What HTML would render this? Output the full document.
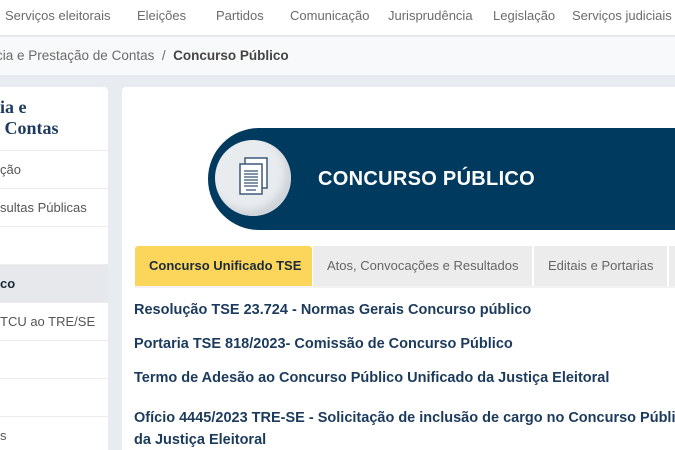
<!DOCTYPE html>
<html><head><meta charset="utf-8"><style>
*{margin:0;padding:0;box-sizing:border-box}
html,body{width:675px;height:450px;overflow:hidden}
body{background:#e8ecf0;font-family:"Liberation Sans",sans-serif;position:relative}
.nav{position:absolute;left:0;top:0;width:675px;height:36px;background:#fff;border-bottom:1px solid #e6e6e6;font-size:13px;color:#6b6b6b;overflow:hidden}
.nav span{position:absolute;top:8px;white-space:nowrap}
.bc{position:absolute;left:0;top:37px;width:675px;height:38px;background:#f8f9fa;font-size:13.5px;color:#6b6b6b;padding:11px 0 0 0;white-space:nowrap;overflow:hidden}
.bc b{color:#444}
.side{position:absolute;left:0;top:87px;width:108px;height:363px;background:#fff;border-radius:0 4px 0 0;overflow:hidden}
.side h2{position:absolute;left:0;top:10px;font-family:"Liberation Serif",serif;font-size:18px;line-height:21px;color:#1e3a5f;font-weight:bold}
.item{position:absolute;left:0;width:108px;height:38px;border-top:1px solid #ececec;font-size:13px;color:#555;padding:11px 0 0 0;white-space:nowrap;overflow:hidden}
.main{position:absolute;left:122px;top:87px;width:553px;height:363px;background:#fff;border-radius:4px 0 0 0;overflow:hidden}
.ban{position:absolute;left:86px;top:41px;width:467px;height:102px;background:#003a5f;border-radius:51px 0 0 51px}
.circ{position:absolute;left:93px;top:53px;width:76px;height:76px;border-radius:50%;background:#e9ecef;box-shadow:inset -6px -6px 8px #cfd4da}
.ban span{position:absolute;left:110px;top:40px;color:#fff;font-size:20px;font-weight:bold;letter-spacing:0.3px}
.tab{position:absolute;top:159px;height:40px;background:#ececec;font-size:13px;color:#666;padding:12px 0 0 14px;white-space:nowrap;overflow:hidden}
.a{position:absolute;left:12px;font-size:14.5px;font-weight:bold;color:#1b3a5c;white-space:nowrap}
</style></head><body>
<div class="nav"><span style="left:5px">Serviços eleitorais</span><span style="left:137px">Eleições</span><span style="left:216px">Partidos</span><span style="left:290px">Comunicação</span><span style="left:388px">Jurisprudência</span><span style="left:493px">Legislação</span><span style="left:572px">Serviços judiciais</span></div>
<div class="bc"><span style="margin-left:-4px">cia e Prestação de Contas &nbsp;/&nbsp; <b>Concurso Público</b></span></div>
<div class="side"><h2>ia e<br>&nbsp;Contas</h2>
<div class="item" style="top:63px">ção</div>
<div class="item" style="top:101px">sultas Públicas</div>
<div class="item" style="top:139px"></div>
<div class="item" style="top:177px;background:#e6e8eb;font-weight:bold;color:#1b2a3a">co</div>
<div class="item" style="top:215px">TCU ao TRE/SE</div>
<div class="item" style="top:253px"></div>
<div class="item" style="top:291px"></div>
<div class="item" style="top:329px">s</div>
</div>
<div class="main">
<div class="ban"><span>CONCURSO PÚBLICO</span></div>
<div class="circ"></div>
<svg style="position:absolute;left:113px;top:69px" width="40" height="44" viewBox="0 0 40 44"><rect x="10" y="2" width="22" height="30" fill="#fff" stroke="#3d5a78" stroke-width="1.5"/><rect x="5" y="8" width="22" height="30" fill="#fff" stroke="#3d5a78" stroke-width="1.5"/><g stroke="#3d5a78" stroke-width="1.3"><line x1="9" y1="15" x2="23" y2="15"/><line x1="9" y1="18" x2="23" y2="18"/><line x1="9" y1="21" x2="23" y2="21"/><line x1="9" y1="24" x2="23" y2="24"/><line x1="9" y1="27" x2="23" y2="27"/><line x1="9" y1="30" x2="23" y2="30"/><line x1="11" y1="34" x2="21" y2="34"/></g></svg>
<div class="tab" style="left:13px;width:177px;background:#fcd65b;color:#1b2a3a;font-weight:bold;border-radius:3px 3px 0 0">Concurso Unificado TSE</div>
<div class="tab" style="left:191px;width:219px">Atos, Convocações e Resultados</div>
<div class="tab" style="left:412px;width:133px">Editais e Portarias</div>
<div class="tab" style="left:547px;width:6px;padding:0"></div>
<div style="position:absolute;left:13px;top:199px;width:540px;height:2px;background:#f2f2f2"></div>
<div class="a" style="top:215px">Resolução TSE 23.724 - Normas Gerais Concurso público</div>
<div class="a" style="top:249px">Portaria TSE 818/2023- Comissão de Concurso Público</div>
<div class="a" style="top:283px">Termo de Adesão ao Concurso Público Unificado da Justiça Eleitoral</div>
<div class="a" style="top:323px">Ofício 4445/2023 TRE-SE - Solicitação de inclusão de cargo no Concurso Público</div>
<div class="a" style="top:345px">da Justiça Eleitoral</div>
</div>
</body></html>
